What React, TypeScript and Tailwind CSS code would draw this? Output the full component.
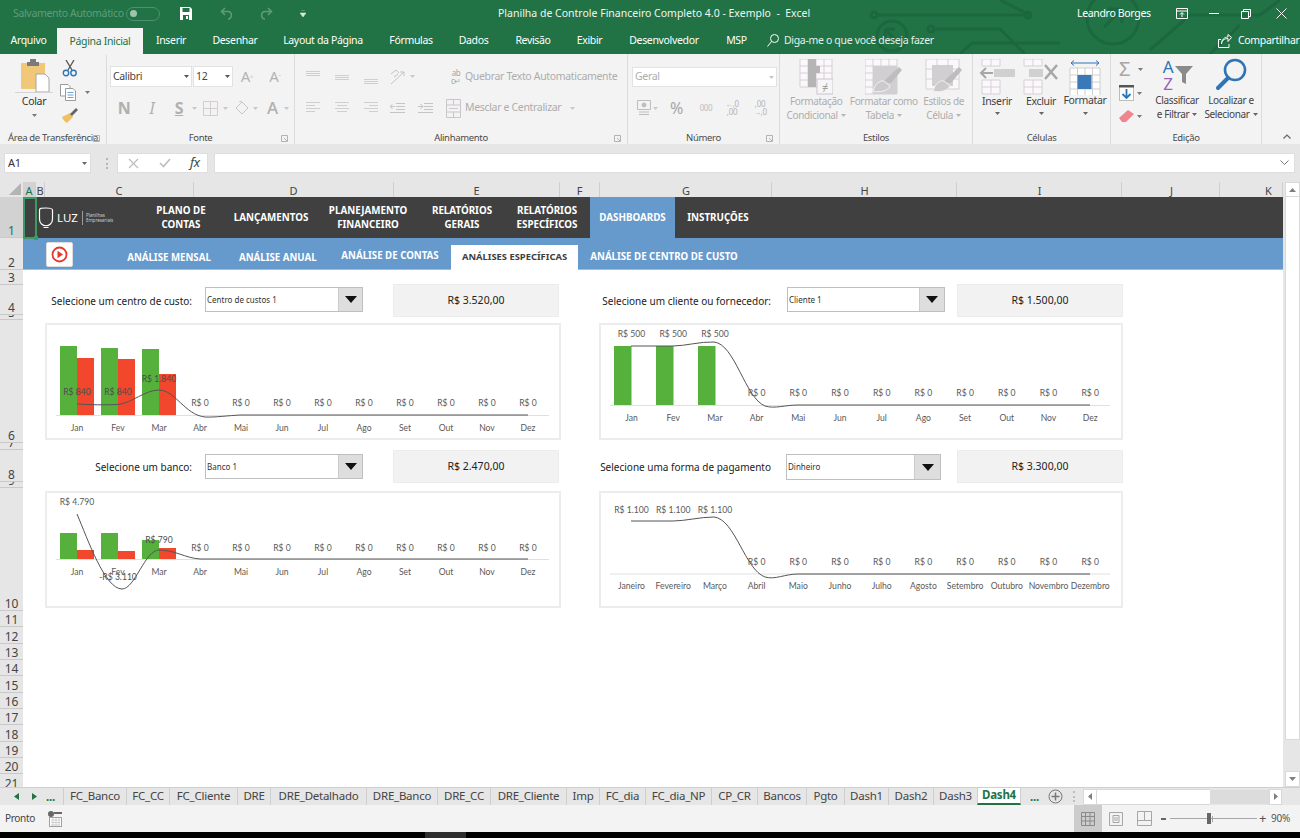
import React from "react";

const tabs = [
  { t: "Arquivo", c: "w-[57px]" },
  { t: "Página Inicial", c: "w-[86px] bg-[#f3f3f3] text-[#217346] h-[26px] self-start mt-px" },
  { t: "Inserir", c: "w-[56px]" },
  { t: "Desenhar", c: "w-[72px]" },
  { t: "Layout da Página", c: "w-[104px]" },
  { t: "Fórmulas", c: "w-[72px]" },
  { t: "Dados", c: "w-[53px]" },
  { t: "Revisão", c: "w-[66px]" },
  { t: "Exibir", c: "w-[47px]" },
  { t: "Desenvolvedor", c: "w-[102px]" },
  { t: "MSP", c: "w-[43px]" },
];

const sheetTabs = [
  { t: "FC_Banco", c: "w-[63px]" },
  { t: "FC_CC", c: "w-[43px]" },
  { t: "FC_Cliente", c: "w-[68px]" },
  { t: "DRE", c: "w-[33px]" },
  { t: "DRE_Detalhado", c: "w-[96px]" },
  { t: "DRE_Banco", c: "w-[71px]" },
  { t: "DRE_CC", c: "w-[53px]" },
  { t: "DRE_Cliente", c: "w-[76px]" },
  { t: "Imp", c: "w-[33px]" },
  { t: "FC_dia", c: "w-[46px]" },
  { t: "FC_dia_NP", c: "w-[66px]" },
  { t: "CP_CR", c: "w-[46px]" },
  { t: "Bancos", c: "w-[49px]" },
  { t: "Pgto", c: "w-[38px]" },
  { t: "Dash1", c: "w-[44px]" },
  { t: "Dash2", c: "w-[45px]" },
  { t: "Dash3", c: "w-[44px]" },
];

const cols = [
  { t: "A", c: "w-[13px] bg-[#d2d2d2] text-[#217346]" },
  { t: "B", c: "w-[9px]" },
  { t: "C", c: "w-[149px]" },
  { t: "D", c: "w-[200px]" },
  { t: "E", c: "w-[166px]" },
  { t: "F", c: "w-[40px]" },
  { t: "G", c: "w-[172px] pl-[1px]" },
  { t: "H", c: "w-[185px] pl-[1px]" },
  { t: "I", c: "w-[165px] pl-[1px]" },
  { t: "J", c: "w-[98px] pl-[2px]" },
  { t: "K", c: "w-[63px] pl-[35px]" },
];

const rows = [
  { t: "1", c: "h-[41px] bg-[#d2d2d2] text-[#217346]" },
  { t: "2", c: "h-[32px]" },
  { t: "3", c: "h-[15px]" },
  { t: "4", c: "h-[30px]" },
  { t: "5", c: "h-[5px]" },
  { t: "6", c: "h-[123px]" },
  { t: "7", c: "h-[7px]" },
  { t: "8", c: "h-[32px]" },
  { t: "9", c: "h-[6px]" },
  { t: "10", c: "h-[123px]" },
  ...[11, 12, 13, 14, 15, 16, 17, 18, 19, 20, 21].map((n) => ({ t: String(n), c: "h-[16.35px]" })),
];

function Caret({ c = "#7a7a7a" }: { c?: string }) {
  return (
    <svg width="5" height="3" viewBox="0 0 5 3" className="shrink-0">
      <path d="M0 0h5L2.5 3z" fill={c} />
    </svg>
  );
}

function Lines({ w, color = "#cfcfcf" }: { w: number[][]; color?: string }) {
  return (
    <svg width="15" height="14" viewBox="0 0 15 14">
      {w.map((l, i) => (
        <rect key={i} x={l[0]} y={l[2]} width={l[1]} height="1" fill={color} />
      ))}
    </svg>
  );
}

function CellGrid({ x, y, cw, ch, nx, ny, color = "#d6d0d6", fill = "#faf8fa" }: { x: number; y: number; cw: number; ch: number; nx: number; ny: number; color?: string; fill?: string }) {
  const a: React.ReactNode[] = [];
  for (let i = 0; i <= nx; i++) a.push(<line key={"v" + i} x1={x + i * cw} x2={x + i * cw} y1={y} y2={y + ny * ch} stroke={color} />);
  for (let i = 0; i <= ny; i++) a.push(<line key={"h" + i} y1={y + i * ch} y2={y + i * ch} x1={x} x2={x + nx * cw} stroke={color} />);
  return (
    <g>
      <rect x={x} y={y} width={nx * cw} height={ny * ch} fill={fill} />
      {a}
    </g>
  );
}

function Brush({ x, y }: { x: number; y: number }) {
  return (
    <g transform={`translate(${x} ${y})`}>
      <path d="M0 15 L16 0 L19 3 L8 16 Z" fill="#bdbdbd" />
      <path d="M-10 24 C-8 17 -3 13 1 14 L7 19 C5 24 -4 26 -10 24Z" fill="#cbcbcb" stroke="#f3f3f3" />
    </g>
  );
}

function Group({ label, c, launcher, children }: { label: string; c: string; launcher?: boolean; children: React.ReactNode }) {
  return (
    <div className={"flex flex-col shrink-0 h-full border-r border-[#dcdcdc] " + c}>
      <div className="h-[77px] shrink-0 overflow-visible">{children}</div>
      <div className="relative flex-1 flex items-start justify-center text-[9.5px] leading-[13px] text-[#4a4a4a] whitespace-nowrap">
        {label}
        {launcher && (
          <svg width="7" height="7" viewBox="0 0 7 7" className="absolute right-[6px] top-[4px]">
            <path d="M0.5 0.5H6.5V6.5H0.5Z M3 3L6 6" fill="none" stroke="#b3b3b3" />
          </svg>
        )}
      </div>
    </div>
  );
}

function BigLabel({ a, b, muted }: { a: string; b?: string; muted?: boolean }) {
  return (
    <div className={"flex flex-col items-center text-[10px] tracking-[-0.35px] leading-[14px] -mt-[1px] whitespace-nowrap " + (muted ? "text-[#adadad]" : "text-[#444444]")}>
      <span>{a}</span>
      <span className="flex items-center gap-[3px] h-[14px]">
        {b}
        <Caret c={muted ? "#b5b5b5" : "#666666"} />
      </span>
    </div>
  );
}

function Combo({ text, box, arrow }: { text: string; box: string; arrow: string }) {
  return (
    <div className={"flex bg-white border border-[#bfbfbf] shrink-0 self-start " + box}>
      <div className="flex-1 flex items-center pl-[1px] text-[8px] text-[#333333] whitespace-nowrap">{text}</div>
      <div className={"h-full bg-[#dedede] flex items-center justify-center border-l border-[#cccccc] " + arrow}>
        <svg width="12" height="7" viewBox="0 0 12 7">
          <path d="M0 0h12L6 7z" fill="#111111" />
        </svg>
      </div>
    </div>
  );
}

function Selector({ label, labelW, text, combo, arrow, value, valueM }: { label: string; labelW: string; text: string; combo: string; arrow: string; value: string; valueM: string }) {
  return (
    <div className="flex items-center h-[33px]">
      <div className={"text-right pt-px text-[10px] text-[#222222] whitespace-nowrap shrink-0 " + labelW}>{label}</div>
      <Combo text={text} box={combo} arrow={arrow} />
      <div className={"h-[33px] w-[166px] bg-[#f2f2f2] border border-[#ececec] flex items-center justify-center pt-px text-[10.5px] text-[#222222] shrink-0 " + valueM}>{value}</div>
    </div>
  );
}

const short = ["Jan", "Fev", "Mar", "Abr", "Mai", "Jun", "Jul", "Ago", "Set", "Out", "Nov", "Dez"];
const long = ["Janeiro", "Fevereiro", "Março", "Abril", "Maio", "Junho", "Julho", "Agosto", "Setembro", "Outubro", "Novembro", "Dezembro"];

function ChartText({ x, y, t, dark }: { x: number; y: number; t: string; dark?: boolean }) {
  return (
    <text x={x} y={y + 1} textAnchor="middle" fontSize="8.6" fill={dark ? "#4d4d4d" : "#595959"} fontFamily="Lato, sans-serif">
      {t}
    </text>
  );
}

function Chart({ view, children, w }: { view: string; children: React.ReactNode; w: string }) {
  return (
    <div className={"h-[117px] bg-white border-2 border-[#ececec] " + w}>
      <svg viewBox={view} className="block w-full h-full">
        {children}
      </svg>
    </div>
  );
}

const xsL = short.map((_, i) => 77 + i * 41);
const xsR = short.map((_, i) => 631.5 + i * 41.7);

export default function App() {
  return (
    <div className="w-[1300px] h-[838px] overflow-hidden bg-[#e6e6e6] flex flex-col font-['Roboto',sans-serif] tracking-[-0.33px] text-[#444444]">
      {/* Green header */}
      <div className="relative h-[54px] bg-[#217346] shrink-0 text-white">
        <svg className="absolute left-0 top-0" width="1300" height="54" viewBox="0 0 1300 54" fill="none" stroke="#1c673d" strokeWidth="3">
          <path d="M875 15H1027" />
          <circle cx="874" cy="15" r="3" />
          <circle cx="1028" cy="15" r="3" />
          <path d="M932 29H1000L1025 54" />
          <circle cx="931" cy="29" r="3" />
          <circle cx="892" cy="36" r="15" />
          <path d="M885 29L897 42M885 29H895M885 29V39" />
          <circle cx="1113" cy="18" r="26" />
          <path d="M1104 27L1122 9M1122 9H1108M1122 9V23" />
          <path d="M1000 0L1030 15M1150 50L1190 15H1260L1280 0M1210 54L1240 25M960 54L972 43H1060" />
        </svg>
        <div className="relative flex items-center h-[27px]">
          <span className="ml-[13px] w-[112px] text-[10.5px] text-[#5f9c7b] whitespace-nowrap">Salvamento Automático</span>
          <span className="ml-[1px] w-[34px] h-[14px] rounded-full border border-[#4f9070] flex items-center pl-[3px]">
            <span className="w-[7px] h-[7px] rounded-full bg-[#9cc4ae]" />
          </span>
          <svg className="ml-[20px]" width="12" height="13" viewBox="0 0 12 13">
            <path d="M0 0H10L12 2V13H0Z" fill="#ffffff" />
            <rect x="2.5" y="1" width="7" height="4" fill="#217346" />
            <rect x="3" y="8" width="6" height="5" fill="#217346" />
            <rect x="6" y="9" width="2" height="3" fill="#ffffff" />
          </svg>
          <svg className="ml-[28px]" width="13" height="13" viewBox="0 0 13 13" fill="none" stroke="#629b7c" strokeWidth="1.5">
            <path d="M5 1L1.5 4.5L5 8M2 4.5H8C13 4.5 12 12 8 12" />
          </svg>
          <svg className="ml-[27px]" width="13" height="13" viewBox="0 0 13 13" fill="none" stroke="#629b7c" strokeWidth="1.5">
            <path d="M8 1L11.5 4.5L8 8M11 4.5H5C0 4.5 1 12 5 12" />
          </svg>
          <svg className="ml-[27px]" width="6" height="7" viewBox="0 0 6 7">
            <path d="M1 0H5M0 3H6L3 7Z" fill="#dce9e2" stroke="#dce9e2" strokeWidth="0.5" />
          </svg>
          <div className="ml-[192px] w-[298px] text-center text-[10.5px] tracking-normal whitespace-pre text-[#f0f5f2]">Planilha de Controle Financeiro Completo 4.0 - Exemplo  -  Excel</div>
          <div className="ml-[281px] w-[72px] text-center text-[10.5px] whitespace-nowrap">Leandro Borges</div>
          <svg className="ml-[27px]" width="12" height="11" viewBox="0 0 12 11" fill="none" stroke="#ffffff">
            <path d="M.5 .5H11.5V10.5H.5ZM.5 3H11.5M6 9V5M4 6.5L6 4.5L8 6.5" />
          </svg>
          <svg className="ml-[21px]" width="10" height="2" viewBox="0 0 10 2">
            <rect width="10" height="1" fill="#ffffff" />
          </svg>
          <svg className="ml-[22px]" width="10" height="10" viewBox="0 0 10 10" fill="none" stroke="#ffffff">
            <path d="M.5 2.5H7.5V9.5H.5ZM2.5 2.5V.5H9.5V7.5H7.5" />
          </svg>
          <svg className="ml-[25px]" width="11" height="11" viewBox="0 0 11 11" fill="none" stroke="#ffffff">
            <path d="M.5 .5L10.5 10.5M10.5 .5L.5 10.5" />
          </svg>
        </div>
        <div className="relative flex items-center h-[27px] text-[10.5px] text-[#ffffff]">
          {tabs.map((t) => (
            <div key={t.t} className={"flex items-center justify-center pt-px h-full whitespace-nowrap " + t.c}>
              {t.t}
            </div>
          ))}
          <svg className="ml-[9px]" width="12" height="13" viewBox="0 0 12 13" fill="none" stroke="#ffffff">
            <circle cx="7.5" cy="4.5" r="4" />
            <path d="M4.5 7.5L.5 12.5" />
          </svg>
          <div className="ml-[5px] w-[153px] pt-px text-[10.5px] text-[#e4efe9] whitespace-nowrap">Diga-me o que você deseja fazer</div>
          <svg className="ml-[281px]" width="14" height="14" viewBox="0 0 14 14" fill="none" stroke="#ffffff">
            <path d="M3 5.5H.5V13.5H11V10M3.5 10C4 6 7 4.5 10 4.5V7.5L13.5 3.5L10 .5V3C6 3 3.500 6 3.500 10Z" />
          </svg>
          <div className="ml-[6px] w-[62px] pt-px whitespace-nowrap">Compartilhar</div>
        </div>
      </div>

      {/* Ribbon */}
      <div className="flex h-[90px] bg-[#f3f3f3] shrink-0">
        <Group label="Área de Transferência" c="w-[107px]" launcher>
          <div className="flex pl-[11px]">
            <div className="w-[46px] flex flex-col items-center pt-[5px]">
              <svg width="34" height="33" viewBox="0 0 34 33">
                <path d="M4 4H28V30H4Z" fill="#f0c878" />
                <path d="M10 3H13V0H19V3H22V7H10Z" fill="#7a7a7a" />
                <path d="M19 15H28L32 19V33H19Z" fill="#ffffff" stroke="#a6a6a6" />
              </svg>
              <div className="w-[38px] h-px bg-[#d4d4d4]" />
              <div className="text-[10.5px] leading-[14px] mt-[1px] text-[#333333]">Colar</div>
              <div className="mt-[6px]"><Caret /></div>
            </div>
            <div className="ml-[3px] flex flex-col pt-[6px]">
              <svg width="16" height="17" viewBox="0 0 16 17" fill="none" className="ml-[2px]">
                <path d="M4 0L10 10M12 0L6 10" stroke="#555555" strokeWidth="1.3" />
                <circle cx="4" cy="13" r="2.700" stroke="#2e75b6" strokeWidth="1.4" />
                <circle cx="11.500" cy="13" r="2.700" stroke="#2e75b6" strokeWidth="1.4" />
              </svg>
              <div className="flex items-center mt-[7px]">
                <svg width="16" height="17" viewBox="0 0 16 17" fill="none">
                  <path d="M.5 .5H8L10 2.500V12H.5Z" fill="#ffffff" stroke="#9a9a9a" />
                  <path d="M5.500 4.500H13L15.500 7V16.500H5.500Z" fill="#ffffff" stroke="#9a9a9a" />
                  <path d="M7.500 8.500H13.500M7.500 11H13.500M7.500 13.500H13.500" stroke="#6ea3cf" />
                </svg>
                <span className="ml-[9px]"><Caret /></span>
              </div>
              <svg width="16" height="16" viewBox="0 0 16 16" className="mt-[7px] ml-[2px]">
                <path d="M8 5L11 9L5 15C3 14 1 12 0 9Z" fill="#eec062" />
                <path d="M8 6L14 0L16 2L10 8Z" fill="#666666" />
              </svg>
            </div>
          </div>
        </Group>

        <Group label="Fonte" c="w-[188px]" launcher>
          <div className="pt-[12px] pl-[3px]">
            <div className="flex items-center h-[21px]">
              <div className="w-[82px] h-full bg-white border border-[#e2e2e2] flex items-center justify-between px-[2px] text-[10.5px] text-[#444444]">
                Calibri <Caret c="#555555" />
              </div>
              <div className="ml-px w-[40px] h-full bg-white border border-[#e2e2e2] flex items-center justify-between px-[2px] text-[10.5px]">
                12 <Caret c="#555555" />
              </div>
              <span className="w-[28px] text-center text-[15px] leading-[15px] text-[#b3b3b3]">A<sup className="text-[6px]">^</sup></span>
              <span className="w-[28px] text-center text-[15px] leading-[15px] text-[#b3b3b3]">A<sup className="text-[6px]">ˇ</sup></span>
            </div>
            <div className="flex items-center h-[22px] mt-[10px] text-[#b0b0b0]">
              <span className="w-[28px] text-center text-[16px] font-bold">N</span>
              <span className="w-[28px] text-center text-[16px] italic font-['Liberation_Serif',serif]">I</span>
              <span className="w-[26px] text-center text-[16px] font-bold underline">S</span>
              <Caret c="#c8c8c8" />
              <svg className="ml-[6px]" width="15" height="15" viewBox="0 0 15 15" fill="none" stroke="#d3cdd3">
                <path d="M.5 .5H14.500V14.500H.5ZM7.500 .5V14.500M.5 7.500H14.500" />
              </svg>
              <span className="ml-[5px]"><Caret c="#c8c8c8" /></span>
              <svg className="ml-[7px]" width="15" height="15" viewBox="0 0 15 15" fill="none" stroke="#c6c6c6">
                <path d="M7 1L13 7L7 13L1 7ZM7 1L4 0" />
              </svg>
              <span className="ml-[3px]"><Caret c="#c8c8c8" /></span>
              <span className="ml-[9px] text-[17px] font-medium">A</span>
              <span className="ml-[6px]"><Caret c="#c8c8c8" /></span>
            </div>
          </div>
        </Group>

        <Group label="Alinhamento" c="w-[333px]" launcher>
          <div className="pt-[12px] pl-[11px]">
            <div className="flex items-center h-[21px]">
              <span className="w-[29px]"><Lines w={[[0, 14, 1], [0, 14, 3], [0, 14, 5]]} /></span>
              <span className="w-[29px]"><Lines w={[[0, 14, 5], [0, 14, 7], [0, 14, 9]]} /></span>
              <span className="w-[26px]"><Lines w={[[0, 14, 9], [0, 14, 11], [0, 14, 13]]} /></span>
              <svg width="19" height="16" viewBox="0 0 19 16" fill="none" stroke="#c4c4c4">
                <path d="M1 15L14 3M10 3H14V7M1 5L6 1L9 4M4 8L8 5" />
              </svg>
              <span className="ml-[1px]"><Caret c="#c8c8c8" /></span>
              <span className="ml-[35px] w-[12px] text-[8px] leading-[8px] text-[#a6a6a6] text-center">ab<br />c↵</span>
              <span className="ml-[3px] text-[10.5px] text-[#adadad] whitespace-nowrap">Quebrar Texto Automaticamente</span>
            </div>
            <div className="flex items-center h-[22px] mt-[10px]">
              <span className="w-[29px]"><Lines w={[[0, 14, 1], [0, 9, 4], [0, 14, 7], [0, 9, 10]]} /></span>
              <span className="w-[29px]"><Lines w={[[0, 14, 1], [2, 10, 4], [0, 14, 7], [2, 10, 10]]} /></span>
              <span className="w-[26px]"><Lines w={[[0, 14, 1], [5, 9, 4], [0, 14, 7], [5, 9, 10]]} /></span>
              <svg width="15" height="12" viewBox="0 0 15 12" fill="none" stroke="#c4c4c4">
                <path d="M6 1.500H15M6 4.500H15M6 7.500H15M0 10.500H15M5 4.500H0M2.500 2L0 4.500L2.500 7" />
              </svg>
              <svg className="ml-[13px]" width="15" height="12" viewBox="0 0 15 12" fill="none" stroke="#c4c4c4">
                <path d="M6 1.500H15M6 4.500H15M6 7.500H15M0 10.500H15M0 4.500H5M2.500 2L5 4.500L2.500 7" />
              </svg>
              <svg className="ml-[13px]" width="15" height="19" viewBox="0 0 15 19" fill="none" stroke="#cbc5cb">
                <path d="M.5 .5H14.500V18.500H.5ZM.5 6H14.500M.5 13H14.500M7.500 .5V6M7.500 13V18.500M3 9.500H12" />
              </svg>
              <span className="ml-[4px] text-[10.5px] text-[#adadad] whitespace-nowrap">Mesclar e Centralizar</span>
              <span className="ml-[9px]"><Caret c="#c8c8c8" /></span>
            </div>
          </div>
        </Group>

        <Group label="Número" c="w-[152px]" launcher>
          <div className="pt-[13px] pl-[4px]">
            <div className="w-[145px] h-[20px] bg-white border border-[#e2e2e2] flex items-center justify-between px-[2px] text-[10.5px] text-[#adadad]">
              Geral <Caret c="#c8c8c8" />
            </div>
            <div className="flex items-center h-[22px] mt-[10px] text-[#b3b3b3]">
              <svg className="ml-[5px]" width="14" height="16" viewBox="0 0 14 16" fill="none" stroke="#bdbdbd">
                <path d="M.5 .5H13.500V9.500H.5Z" />
                <circle cx="7" cy="5" r="2" fill="#bdbdbd" />
                <path d="M2 12H12M2 14.500H12" />
              </svg>
              <span className="ml-[2px]"><Caret c="#c8c8c8" /></span>
              <span className="ml-[12px] w-[18px] text-[16px] text-[#a6a6a6]">%</span>
              <span className="ml-[8px] w-[20px] text-[8px] text-[#bdbdbd] text-center">000</span>
              <span className="ml-[6px] w-[20px] text-[8px] leading-[8px] text-[#b3b3b3] text-center">←,0<br />,00</span>
              <span className="ml-[8px] w-[20px] text-[8px] leading-[8px] text-[#b3b3b3] text-center">,00<br />→,0</span>
            </div>
          </div>
        </Group>

        <Group label="Estilos" c="w-[193px]">
          <div className="flex pt-[5px]">
            <div className="w-[74px] flex flex-col items-center">
              <svg width="34" height="36" viewBox="0 0 34 36">
                <CellGrid x={1} y={0} cw={8} ch={7} nx={4} ny={4} />
                <rect x="9" y="0" width="8" height="28" fill="#b5b5b5" />
                <rect x="17" y="7" width="4" height="7" fill="#b5b5b5" />
                <rect x="18" y="20" width="16" height="15" fill="#f7f5f7" stroke="#c9c3c9" />
                <text x="26" y="32" textAnchor="middle" fontSize="11" fill="#a0a0a0">≠</text>
              </svg>
              <BigLabel a="Formatação" b="Condicional" muted />
            </div>
            <div className="w-[63px] flex flex-col items-center">
              <svg width="38" height="36" viewBox="0 0 38 36">
                <CellGrid x={0} y={0} cw={8} ch={7} nx={4} ny={5} />
                <rect x="8" y="7" width="24" height="28" fill="#d2cfd2" />
                <Brush x={18} y={8} />
              </svg>
              <BigLabel a="Formatar como" b="Tabela" muted />
            </div>
            <div className="w-[58px] flex flex-col items-center">
              <svg width="38" height="36" viewBox="0 0 38 36">
                <CellGrid x={1} y={0} cw={11} ch={10} nx={3} ny={3} />
                <rect x="7" y="6" width="21" height="21" fill="#d2cfd2" />
                <Brush x={18} y={8} />
              </svg>
              <BigLabel a="Estilos de" b="Célula" muted />
            </div>
          </div>
        </Group>

        <Group label="Células" c="w-[138px]">
          <div className="flex pt-[5px] pl-[2px]">
            <div className="w-[44px] flex flex-col items-center">
              <svg width="36" height="36" viewBox="0 0 36 36">
                <CellGrid x={3} y={0} cw={9} ch={7} nx={2} ny={1} />
                <CellGrid x={3} y={21} cw={9} ch={7} nx={2} ny={2} />
                <rect x="15" y="10" width="21" height="8" fill="#d0d0d0" />
                <path d="M14 14H2M7 9L2 14L7 19" fill="none" stroke="#a6a6a6" strokeWidth="2" />
              </svg>
              <div className="text-[10.5px] leading-[14px] -mt-[1px] text-[#444444]">Inserir</div>
              <div className="mt-[4px]"><Caret c="#666666" /></div>
            </div>
            <div className="w-[44px] flex flex-col items-center">
              <svg width="36" height="36" viewBox="0 0 36 36">
                <CellGrid x={1} y={0} cw={9} ch={7} nx={2} ny={1} />
                <CellGrid x={1} y={21} cw={9} ch={7} nx={2} ny={2} />
                <rect x="6" y="10" width="14" height="8" fill="#d0d0d0" />
                <path d="M22 6L34 20M34 6L22 20" stroke="#a6a6a6" strokeWidth="2.500" />
              </svg>
              <div className="text-[10.5px] leading-[14px] -mt-[1px] text-[#444444]">Excluir</div>
              <div className="mt-[4px]"><Caret c="#666666" /></div>
            </div>
            <div className="w-[44px] flex flex-col items-center">
              <svg width="32" height="36" viewBox="0 0 32 36">
                <path d="M2 4H30M2 4L5 1.500M2 4L5 6.500M30 4L27 1.500M30 4L27 6.500" fill="none" stroke="#2e75b6" />
                <CellGrid x={1} y={9} cw={7.500} ch={7} nx={4} ny={4} color="#cfcfcf" fill="#ffffff" />
                <rect x="8.500" y="16" width="14" height="14" fill="#3a78b8" />
              </svg>
              <div className="text-[10.5px] leading-[14px] -mt-[2px] text-[#444444]">Formatar</div>
              <div className="mt-[5px]"><Caret c="#666666" /></div>
            </div>
          </div>
        </Group>

        <Group label="Edição" c="w-[151px]">
          <div className="flex pt-[4px] pl-[8px]">
            <div className="w-[30px] flex flex-col pt-[2px]">
              <div className="flex items-center h-[18px]">
                <span className="w-[17px] text-[20px] leading-[18px] text-[#a6a6a6]">Σ</span>
                <span className="ml-[2px]"><Caret c="#7a7a7a" /></span>
              </div>
              <div className="flex items-center h-[20px] mt-[5px]">
                <svg width="15" height="16" viewBox="0 0 15 16">
                  <rect x=".5" y=".5" width="14" height="15" fill="#ffffff" stroke="#bdbdbd" />
                  <rect x="0" y="0" width="15" height="2.500" fill="#555555" />
                  <path d="M7.500 4V13M3.500 9L7.500 13L11.500 9" fill="none" stroke="#2e75b6" strokeWidth="1.800" />
                </svg>
                <span className="ml-[3px]"><Caret c="#7a7a7a" /></span>
              </div>
              <div className="flex items-center h-[16px] mt-[5px]">
                <svg width="15" height="12" viewBox="0 0 15 12">
                  <path d="M0 8L9 0L15 4L7 12H3Z" fill="#f08590" />
                </svg>
                <span className="ml-[3px]"><Caret c="#7a7a7a" /></span>
              </div>
            </div>
            <div className="w-[54px] flex flex-col items-center ml-[1px]">
              <svg width="32" height="34" viewBox="0 0 32 34">
                <text x="7" y="15" textAnchor="middle" fontSize="17" fill="#2e75b6" fontFamily="Noto Sans">A</text>
                <text x="7" y="32" textAnchor="middle" fontSize="17" fill="#9a5fb8" fontFamily="Noto Sans">Z</text>
                <path d="M14 8H32L25 16V26L21 24V16Z" fill="#8a8a8a" />
              </svg>
              <div className="mt-[2px]"><BigLabel a="Classificar" b="e Filtrar" /></div>
            </div>
            <div className="w-[52px] flex flex-col items-center ml-[1px]">
              <svg width="32" height="34" viewBox="0 0 32 34" fill="none" stroke="#2e75b6">
                <circle cx="20" cy="12" r="10" strokeWidth="2.600" />
                <path d="M13 20L3 30" strokeWidth="4" strokeLinecap="round" />
              </svg>
              <div className="mt-[2px]"><BigLabel a="Localizar e" b="Selecionar" /></div>
            </div>
          </div>
        </Group>
        <div className="flex-1 flex justify-end items-end pb-[5px] pr-[9px]">
          <svg width="8" height="5" viewBox="0 0 8 5" fill="none" stroke="#666666" strokeWidth="1.200">
            <path d="M.5 4.500L4 1L7.500 4.500" />
          </svg>
        </div>
      </div>

      {/* Formula bar */}
      <div className="flex items-start h-[38px] pt-[9px] shrink-0">
        <div className="ml-[4px] w-[87px] h-[20px] bg-white border border-[#dedede] flex items-center justify-between px-[3px] text-[11px] text-[#333333]">
          A1 <Caret c="#666666" />
        </div>
        <div className="ml-[15px] mt-[5px] w-[2px] h-[11px] border-l-2 border-dotted border-[#b5b5b5]" />
        <div className="ml-[9px] w-[91px] h-[20px] bg-white border border-[#dedede] flex items-center text-[#bdbdbd]">
          <svg className="ml-[10px]" width="11" height="11" viewBox="0 0 11 11" fill="none" stroke="#bdbdbd" strokeWidth="1.200">
            <path d="M1 1L10 10M10 1L1 10" />
          </svg>
          <svg className="ml-[20px]" width="12" height="10" viewBox="0 0 12 10" fill="none" stroke="#bdbdbd" strokeWidth="1.600">
            <path d="M1 5L4.500 8.500L11 1" />
          </svg>
          <span className="ml-[19px] font-['Liberation_Serif',serif] italic text-[13px] text-[#444444]">fx</span>
        </div>
        <div className="ml-[6px] w-[1081px] h-[20px] bg-white border border-[#dedede] flex items-center justify-end pr-[5px]">
          <svg width="9" height="6" viewBox="0 0 9 6" fill="none" stroke="#777777">
            <path d="M.5 .5L4.500 4.500L8.500 .5" />
          </svg>
        </div>
      </div>

      {/* Sheet */}
      <div className="flex h-[605px] shrink-0 font-['Lato',sans-serif] tracking-normal">
        <div className="w-[1283px] flex flex-col shrink-0">
          <div className="flex h-[15px] shrink-0 bg-[#e6e6e6] text-[11px] leading-[15px] text-[#444444]">
            <div className="w-[23px] flex items-end justify-end pr-[2px] pb-[2px]">
              <svg width="12" height="12" viewBox="0 0 12 12">
                <path d="M12 0V12H0Z" fill="#b4b4b4" />
              </svg>
            </div>
            {cols.map((c) => (
              <div key={c.t} className={"flex items-center justify-center pt-px border-r border-[#cfcfcf] " + c.c}>
                {c.t}
              </div>
            ))}
          </div>
          <div className="flex flex-1 min-h-0">
            <div className="w-[23px] shrink-0 overflow-hidden bg-[#e6e6e6] text-[12px] text-[#444444]">
              {rows.map((r) => (
                <div key={r.t} className={"flex items-end justify-center overflow-hidden border-b border-[#c9c9c9] leading-[12px] " + r.c}>
                  {r.t}
                </div>
              ))}
            </div>
            <div className="relative w-[1260px] bg-white">
              <div className="flex h-[41px] pt-px bg-[#404040] text-white text-[9.8px] leading-[14px] font-bold text-center">
                <div className="w-[127px] flex items-center pl-[15px]">
                  <svg width="16" height="22" viewBox="0 0 16 22" fill="none" stroke="#ffffff" strokeWidth="1.200">
                    <path d="M1.500 3C1.500 1.500 3 1 8 1C13 1 14.500 1.500 14.500 3V12C14.500 21 1.500 21 1.500 12ZM5.500 20.500H10.500" />
                  </svg>
                  <span className="ml-[3px] text-[11.5px] font-normal">LUZ</span>
                  <span className="ml-[4px] w-px h-[14px] bg-[#9a9a9a]" />
                  <span className="ml-[3px] text-[4.5px] leading-[5.500px] font-normal text-left text-[#cccccc]">Planilhas<br />Empresariais</span>
                </div>
                <div className="w-[62px] flex items-center justify-center">PLANO DE<br />CONTAS</div>
                <div className="ml-[14px] w-[90px] flex items-center justify-center">LANÇAMENTOS</div>
                <div className="w-[104px] flex items-center justify-center">PLANEJAMENTO<br />FINANCEIRO</div>
                <div className="w-[84px] flex items-center justify-center">RELATÓRIOS<br />GERAIS</div>
                <div className="w-[86px] flex items-center justify-center">RELATÓRIOS<br />ESPECÍFICOS</div>
                <div className="w-[85px] -mt-px flex items-center justify-center bg-[#6699cc]">DASHBOARDS</div>
                <div className="w-[86px] flex items-center justify-center">INSTRUÇÕES</div>
              </div>
              <div className="absolute left-0 top-0 w-[14px] h-[42px] border-2 border-[#3c9a66]">
                <div className="absolute -right-[3px] -bottom-[3px] w-[4px] h-[4px] bg-[#3c9a66]" />
              </div>
              <div className="flex h-[32px] bg-[#6699cc] border-b border-[#b8b8b8] text-white text-[9.7px] font-bold whitespace-nowrap">
                <div className="ml-[23px] mt-[4px] w-[27px] h-[25px] bg-white rounded-[2px] border border-[#dddddd] flex items-center justify-center">
                  <svg width="17" height="17" viewBox="0 0 17 17" fill="none">
                    <circle cx="8.500" cy="8.500" r="7" stroke="#e8382c" strokeWidth="1.800" />
                    <path d="M6.500 4.800L12 8.500L6.500 12.200Z" fill="#e8382c" />
                  </svg>
                </div>
                <div className="ml-[54px] w-[84px] pt-[13px] text-center">ANÁLISE MENSAL</div>
                <div className="ml-[28px] w-[77px] pt-[13px] text-center">ANÁLISE ANUAL</div>
                <div className="ml-[25px] w-[98px] pt-[11px] text-center">ANÁLISE DE CONTAS</div>
                <div className="ml-[12px] w-[127px] h-[25px] mt-[7px] bg-white text-[#404040] text-[9.4px] flex items-center justify-center">ANÁLISES ESPECÍFICAS</div>
                <div className="ml-[12px] w-[148px] pt-[12px] text-center">ANÁLISE DE CENTRO DE CUSTO</div>
              </div>

              <div className="flex pl-[22px] pt-[14px]">
                <div className="w-[516px] flex flex-col">
                  <Selector label="Selecione um centro de custo:" labelW="w-[147px]" text="Centro de custos 1" combo="w-[158px] h-[25px] mt-[3px] ml-[13px]" arrow="w-[24px]" value="R$ 3.520,00" valueM="ml-[30px]" />
                  <div className="mt-[6px]">
                    <Chart view="47 325 512 113" w="w-[516px]">
                      {[[60, 346, "#55b13c"], [77, 358, "#f2472c"], [101, 348, "#55b13c"], [118, 359, "#f2472c"], [142, 349, "#55b13c"], [159, 374, "#f2472c"]].map((b, i) => (
                        <rect key={i} x={b[0] as number} y={b[1] as number} width="17" height={415 - (b[1] as number)} fill={b[2] as string} />
                      ))}
                      <line x1="56" x2="549" y1="415.500" y2="415.500" stroke="#e0e0e0" />
                      <path d="M77 404C90 405 105 405 118 404.500C132 403 145 390 159 390C175 390 185 415 205 417C215 417.500 228 415.500 241 415L528 415" fill="none" stroke="#555555" />
                      <ChartText x={77} y={394} t="R$ 840" dark />
                      <ChartText x={118} y={394} t="R$ 840" dark />
                      <ChartText x={159} y={381} t="R$ 1.840" dark />
                      {xsL.slice(3).map((x) => <ChartText key={x} x={x} y={405} t="R$ 0" />)}
                      {xsL.map((x, i) => <ChartText key={x} x={x} y={430} t={short[i]} />)}
                    </Chart>
                  </div>
                  <div className="mt-[10px]">
                    <Selector label="Selecione um banco:" labelW="w-[147px]" text="Banco 1" combo="w-[158px] h-[25px] mt-[4px] ml-[13px]" arrow="w-[24px]" value="R$ 2.470,00" valueM="ml-[30px]" />
                  </div>
                  <div className="mt-[8px]">
                    <Chart view="47 493 512 113" w="w-[516px]">
                      {[[60, 533, "#55b13c"], [77, 550, "#f2472c"], [101, 533, "#55b13c"], [118, 551, "#f2472c"], [142, 540, "#55b13c"], [159, 548, "#f2472c"]].map((b, i) => (
                        <rect key={i} x={b[0] as number} y={b[1] as number} width="17" height={559 - (b[1] as number)} fill={b[2] as string} />
                      ))}
                      <line x1="56" x2="549" y1="559.500" y2="559.500" stroke="#e0e0e0" />
                      <path d="M77 514C88 540 105 589 122 589C135 589 145 550 159 550C175 550 185 558 200 559L528 559" fill="none" stroke="#555555" />
                      <ChartText x={77} y={504} t="R$ 4.790" />
                      <ChartText x={159} y={542} t="R$ 790" dark />
                      <ChartText x={118} y={579} t="-R$ 3.110" dark />
                      {xsL.slice(3).map((x) => <ChartText key={x} x={x} y={550} t="R$ 0" />)}
                      {xsL.map((x, i) => <ChartText key={x} x={x} y={574} t={short[i]} />)}
                    </Chart>
                  </div>
                </div>
                <div className="ml-[38px] w-[524px] flex flex-col">
                  <Selector label="Selecione um cliente ou fornecedor:" labelW="w-[172px]" text="Cliente 1" combo="w-[158px] h-[25px] mt-[3px] ml-[16px]" arrow="w-[25px]" value="R$ 1.500,00" valueM="ml-[12px]" />
                  <div className="mt-[6px]">
                    <Chart view="601 325 520 113" w="w-[524px]">
                      {[614, 656, 698].map((x) => <rect key={x} x={x} y="346" width="17.500" height="59" fill="#55b13c" />)}
                      <line x1="610" x2="1110" y1="405.500" y2="405.500" stroke="#e0e0e0" />
                      <path d="M631 346L673 346C685 346 700 341.500 714 342C735 344 745 398 765 406C775 409 785 405 798 405L1090 405" fill="none" stroke="#555555" />
                      {xsR.slice(0, 3).map((x) => <ChartText key={x} x={x} y={336} t="R$ 500" />)}
                      {xsR.slice(3).map((x) => <ChartText key={x} x={x} y={395} t="R$ 0" />)}
                      {xsR.map((x, i) => <ChartText key={x} x={x} y={420} t={short[i]} />)}
                    </Chart>
                  </div>
                  <div className="mt-[10px]">
                    <Selector label="Selecione uma forma de pagamento" labelW="w-[172px]" text="Dinheiro" combo="w-[155px] h-[26px] mt-[4px] ml-[15px]" arrow="w-[26px]" value="R$ 3.300,00" valueM="ml-[16px]" />
                  </div>
                  <div className="mt-[8px]">
                    <Chart view="601 493 520 113" w="w-[524px]">
                      <line x1="610" x2="1110" y1="574" y2="574" stroke="#e0e0e0" />
                      <path d="M631 521L673 521C685 521 700 517 714 517C735 519 745 570 765 577C775 580 785 574 798 574L1090 574" fill="none" stroke="#555555" />
                      {xsR.slice(0, 3).map((x) => <ChartText key={x} x={x} y={512} t="R$ 1.100" />)}
                      {xsR.slice(3).map((x) => <ChartText key={x} x={x} y={564} t="R$ 0" />)}
                      {xsR.map((x, i) => <ChartText key={x} x={x} y={588} t={long[i]} />)}
                    </Chart>
                  </div>
                </div>
              </div>
            </div>
          </div>
        </div>
        {/* vertical scrollbar */}
        <div className="w-[17px] flex flex-col items-center bg-[#e6e6e6] pl-px">
          <div className="w-[15px] h-[15px] bg-white border border-[#d9d9d9] flex items-center justify-center">
            <svg width="7" height="4" viewBox="0 0 7 4"><path d="M3.500 0L7 4H0Z" fill="#808080" /></svg>
          </div>
          <div className="w-[15px] h-[543px] bg-white border-x border-b border-[#d9d9d9]" />
          <div className="flex-1" />
          <div className="w-[15px] h-[16px] bg-white border border-[#d9d9d9] flex items-center justify-center">
            <svg width="7" height="4" viewBox="0 0 7 4"><path d="M0 0H7L3.500 4Z" fill="#808080" /></svg>
          </div>
        </div>
      </div>

      {/* Sheet tabs */}
      <div className="flex items-center h-[18px] shrink-0 bg-[#e6e6e6] border-t border-[#cfcfcf] text-[11.5px] tracking-[-0.25px] text-[#444444] whitespace-nowrap">
        <svg className="ml-[14px]" width="5" height="7" viewBox="0 0 5 7"><path d="M5 0V7L0 3.500Z" fill="#217346" /></svg>
        <svg className="ml-[13px]" width="5" height="7" viewBox="0 0 5 7"><path d="M0 0V7L5 3.500Z" fill="#217346" /></svg>
        <div className="ml-[9px] w-[17px] text-[#217346] font-bold leading-[10px]">...</div>
        {sheetTabs.map((t) => (
          <div key={t.t} className={"h-full flex items-center justify-center pb-px border-l border-[#cfcfcf] " + t.c}>
            {t.t}
          </div>
        ))}
        <div className="w-[44px] h-[17px] self-start pb-px bg-white border-x border-[#cfcfcf] border-b-2 border-b-[#217346] flex items-center justify-center font-bold text-[#217346]">Dash4</div>
        <div className="ml-[9px] w-[13px] text-[#217346] font-bold leading-[10px]">...</div>
        <svg className="ml-[5px]" width="15" height="15" viewBox="0 0 15 15" fill="none" stroke="#777777">
          <circle cx="7.500" cy="7.500" r="6.500" />
          <path d="M7.500 3.500V11.500M3.500 7.500H11.500" strokeWidth="1.500" />
        </svg>
        <div className="ml-[10px] w-[2px] h-[11px] border-l-2 border-dotted border-[#bdbdbd]" />
        <div className="ml-[8px] w-[14px] h-[16px] bg-white border border-[#d9d9d9] flex items-center justify-center">
          <svg width="4" height="7" viewBox="0 0 4 7"><path d="M4 0V7L0 3.500Z" fill="#808080" /></svg>
        </div>
        <div className="w-[113px] h-[16px] bg-white border-y border-[#d9d9d9]" />
        <div className="w-[59px] h-[14px] bg-[#dcdcdc]" />
        <div className="w-[13px] h-[16px] bg-white border border-[#d9d9d9] flex items-center justify-center">
          <svg width="4" height="7" viewBox="0 0 4 7"><path d="M0 0V7L4 3.500Z" fill="#808080" /></svg>
        </div>
      </div>

      {/* Status bar */}
      <div className="flex items-center h-[27px] shrink-0 bg-[#f3f3f3] text-[10px] text-[#444444]">
        <span className="ml-[5px] w-[28px] whitespace-nowrap">Pronto</span>
        <svg className="ml-[15px]" width="14" height="16" viewBox="0 0 14 16">
          <circle cx="3" cy="3" r="3" fill="#666666" />
          <rect x="6" y="1" width="8" height="2" fill="#666666" />
          <rect x="1.500" y="6.500" width="12" height="9" fill="#ffffff" stroke="#a0a0a0" />
          <path d="M3 9H12M3 11.500H12M3 14H12M5 7V15M8 7V15M11 7V15" stroke="#c0c0c0" strokeWidth="0.700" />
        </svg>
        <div className="ml-[1012px] w-[28px] h-full bg-[#cccccc] flex items-center justify-center">
          <svg width="14" height="14" viewBox="0 0 14 14" fill="none" stroke="#8a8a8a">
            <path d="M.5 .5H13.500V13.500H.5ZM.5 4.500H13.500M.5 9H13.500M4.500 .5V13.500M9 .5V13.500" />
          </svg>
        </div>
        <svg className="ml-[7px]" width="14" height="14" viewBox="0 0 14 14" fill="none" stroke="#a6a6a6">
          <path d="M.5 .5H13.500V13.500H.5ZM4 3.500H10V10.500H4ZM5 6H9M5 8H9" />
        </svg>
        <svg className="ml-[14px]" width="15" height="15" viewBox="0 0 15 15" fill="none" stroke="#a6a6a6">
          <path d="M.5 .5H14.500V14.500H.5ZM.5 9.500H14.500M7.500 .5V9.500" />
        </svg>
        <span className="ml-[9px] w-[5px] h-[2px] bg-[#666666]" />
        <div className="ml-[4px] w-[87px] h-px bg-[#a6a6a6] flex items-center">
          <span className="ml-[37px] w-[4px] h-[11px] bg-[#666666]" />
          <span className="ml-[1px] w-px h-[6px] bg-[#a6a6a6]" />
        </div>
        <span className="ml-[2px] text-[13px] leading-[13px] text-[#555555]">+</span>
        <span className="ml-[5px] text-[10px] text-[#555555]">90%</span>
      </div>

      {/* Taskbar strip */}
      <div className="flex flex-1 bg-black">
        <div className="ml-[425px] w-[41px] bg-[#2e2e2e]" />
      </div>
    </div>
  );
}
